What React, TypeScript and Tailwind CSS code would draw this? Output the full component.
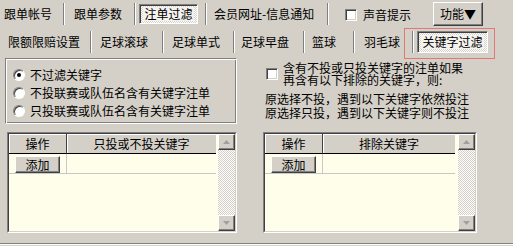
import React from 'react';

const font = "font-['Noto_Sans_CJK_SC','Noto_Sans',sans-serif]";

function Sep({ ml }: { ml: string }) {
    return <div className={`${ml} h-[22px] w-[2px] border-l border-l-[#808080] border-r border-r-white shrink-0`} />;
}

function Label({ ml, w, children }: { ml: string; w: string; children: React.ReactNode }) {
    return <div className={`${ml} ${w} shrink-0 whitespace-nowrap text-[12px] leading-[14px] text-black`}>{children}</div>;
}

// pressed toggle (dithered background)
function Pressed({ ml, w, h, children }: { ml: string; w: string; h: string; children: React.ReactNode }) {
    return (
        <div
            className={`${ml} ${w} ${h} shrink-0 flex items-center justify-center border border-t-[#808080] border-l-[#808080] border-b-white border-r-white bg-[repeating-conic-gradient(#ffffff_0%_25%,#d4d0c8_0%_50%)] bg-[length:2px_2px] shadow-[inset_1px_1px_0_#404040]`}
        >
            <span className="bg-[#f4f2ee] px-[1px] text-[12px] leading-[14px] whitespace-nowrap">{children}</span>
        </div>
    );
}

function Raised({ className, children }: { className: string; children: React.ReactNode }) {
    return (
        <div
            className={`${className} flex items-center justify-center bg-[#d4d0c8] border border-t-white border-l-white border-b-[#404040] border-r-[#404040] shadow-[inset_-1px_-1px_0_#808080]`}
        >
            {children}
        </div>
    );
}

function Box({ className }: { className: string }) {
    return (
        <div className={`${className} shrink-0 bg-white border border-t-[#808080] border-l-[#808080] border-b-white border-r-white shadow-[inset_1px_1px_0_#404040,inset_-1px_-1px_0_#d4d0c8]`} />
    );
}

function Radio({ checked, label }: { checked?: boolean; label: string }) {
    return (
        <div className="h-[18px] flex items-center">
            <div className="ml-[6px] w-[12px] h-[12px] rounded-full bg-white border border-t-[#808080] border-l-[#808080] border-b-white border-r-white shadow-[inset_1px_1px_0_#404040] flex items-center justify-center">
                {checked && <div className="w-[4px] h-[4px] rounded-full bg-black" />}
            </div>
            <span className="ml-[5px] text-[12px] leading-[14px] whitespace-nowrap">{label}</span>
        </div>
    );
}

function Arrow({ up }: { up?: boolean }) {
    return (
        <Raised className="w-[17px] h-[16px] shrink-0">
            <svg width="7" height="4" viewBox="0 0 7 4">
                <path d={up ? 'M3.5 0L7 4H0z' : 'M0 0h7L3.5 4z'} fill="#a0a0a0" />
            </svg>
        </Raised>
    );
}

function Grid({ w, col2, title }: { w: string; col2: string; title: string }) {
    return (
        <div className={`${w} h-[101px] border border-t-[#808080] border-l-[#808080] border-b-white border-r-white`}>
            <div className="w-full h-full flex border border-t-[#404040] border-l-[#404040] border-b-[#d4d0c8] border-r-[#d4d0c8] bg-[#fffeea]">
                <div className="flex-1">
                    <div className="flex h-[20px]">
                        <div className="w-[58px] flex items-center justify-center bg-[#d4d0c8] border-b border-b-black border-r border-r-[#404040] shadow-[inset_1px_1px_0_#fff] text-[12px]">操作</div>
                        <div className={`${col2} flex items-center justify-center bg-[#d4d0c8] border-b border-b-black shadow-[inset_1px_1px_0_#fff] text-[12px]`}>{title}</div>
                    </div>
                    <div className="flex h-[20px]">
                        <div className="w-[58px] border-r border-r-[#c8c8c8] border-b border-b-[#c8c8c8] pt-[2px]">
                            <Raised className="ml-[6px] w-[45px] h-[17px] text-[12px] leading-[14px]">添加</Raised>
                        </div>
                        <div className={`${col2} border-b border-b-[#c8c8c8]`} />
                    </div>
                </div>
                <div className="w-[17px] flex flex-col bg-[repeating-conic-gradient(#ffffff_0%_25%,#d4d0c8_0%_50%)] bg-[length:2px_2px]">
                    <Arrow up />
                    <div className="flex-1" />
                    <Arrow />
                </div>
            </div>
        </div>
    );
}

export default function App() {
    return (
        <div className={`w-[513px] h-[246px] bg-[#d4d0c8] overflow-hidden text-black ${font}`}>
            {/* 第一排 */}
            <div className="flex items-center h-[27px]">
                <Label ml="ml-[4px]" w="w-[48px]">跟单帐号</Label>
                <Sep ml="ml-[11px]" />
                <Label ml="ml-[9px]" w="w-[48px]">跟单参数</Label>
                <Sep ml="ml-[12px]" />
                <Pressed ml="ml-[3px]" w="w-[59px]" h="h-[20px]">注单过滤</Pressed>
                <Sep ml="ml-[7px]" />
                <Label ml="ml-[7px]" w="w-[101px]">会员网址-信息通知</Label>
                <Sep ml="ml-[12px]" />
                <Box className="ml-[16px] mt-[3px] w-[12px] h-[12px]" />
                <Label ml="ml-[6px] mt-[2px]" w="w-[48px]">声音提示</Label>
                <Raised className="ml-[22px] w-[50px] h-[24px] text-[12px] leading-[14px] whitespace-nowrap">功能▼</Raised>
            </div>

            {/* 第二排 */}
            <div className="flex items-center h-[29px]">
                <Label ml="ml-[8px]" w="w-[72px]">限额限赔设置</Label>
                <Sep ml="ml-[10px]" />
                <Label ml="ml-[8px]" w="w-[48px]">足球滚球</Label>
                <Sep ml="ml-[14px]" />
                <Label ml="ml-[8px]" w="w-[48px]">足球单式</Label>
                <Sep ml="ml-[13px]" />
                <Label ml="ml-[6px]" w="w-[48px]">足球早盘</Label>
                <Sep ml="ml-[14px]" />
                <Label ml="ml-[7px]" w="w-[24px]">篮球</Label>
                <Sep ml="ml-[17px]" />
                <Label ml="ml-[9px]" w="w-[36px]">羽毛球</Label>
                <Sep ml="ml-[12px]" />
                <div className="relative ml-[3px]">
                    <Pressed ml="" w="w-[71px]" h="h-[22px]">关键字过滤</Pressed>
                    <div className="absolute -left-[13px] -top-[3px] w-[91px] h-[31px] border border-[#e07878]" />
                </div>
            </div>

            {/* 内容 */}
            <div className="flex">
                <div className="ml-[5px] w-[232px]">
                    <div className="mt-[2px] h-[66px] border border-t-[#808080] border-l-[#808080] border-b-white border-r-white shadow-[inset_1px_1px_0_#fff,inset_-1px_-1px_0_#808080] pt-[7px] pl-[1px]">
                        <Radio checked label="不过滤关键字" />
                        <Radio label="不投联赛或队伍名含有关键字注单" />
                        <Radio label="只投联赛或队伍名含有关键字注单" />
                    </div>
                    <div className="mt-[8px] ml-[2px]">
                        <Grid w="w-[230px]" col2="w-[149px]" title="只投或不投关键字" />
                    </div>
                </div>

                <div className="ml-[26px]">
                    <div className="pt-[6px] flex items-center">
                        <Box className="ml-[3px] w-[12px] h-[12px]" />
                        <div className="ml-[5px] text-[12px] leading-[12px] whitespace-nowrap">
                            <div>含有不投或只投关键字的注单如果</div>
                            <div>再含有以下排除的关键字，则:</div>
                        </div>
                    </div>
                    <div className="mt-[6px] ml-[2px] text-[12px] leading-[14px] whitespace-nowrap">
                        <div>原选择不投，遇到以下关键字依然投注</div>
                        <div>原选择只投，遇到以下关键字则不投注</div>
                    </div>
                    <div className="mt-[12px]">
                        <Grid w="w-[214px]" col2="w-[132px]" title="排除关键字" />
                    </div>
                </div>
            </div>

            <div className="mt-[10px] h-[2px] border-t border-t-[#808080] border-b border-b-white" />
        </div>
    );
}
